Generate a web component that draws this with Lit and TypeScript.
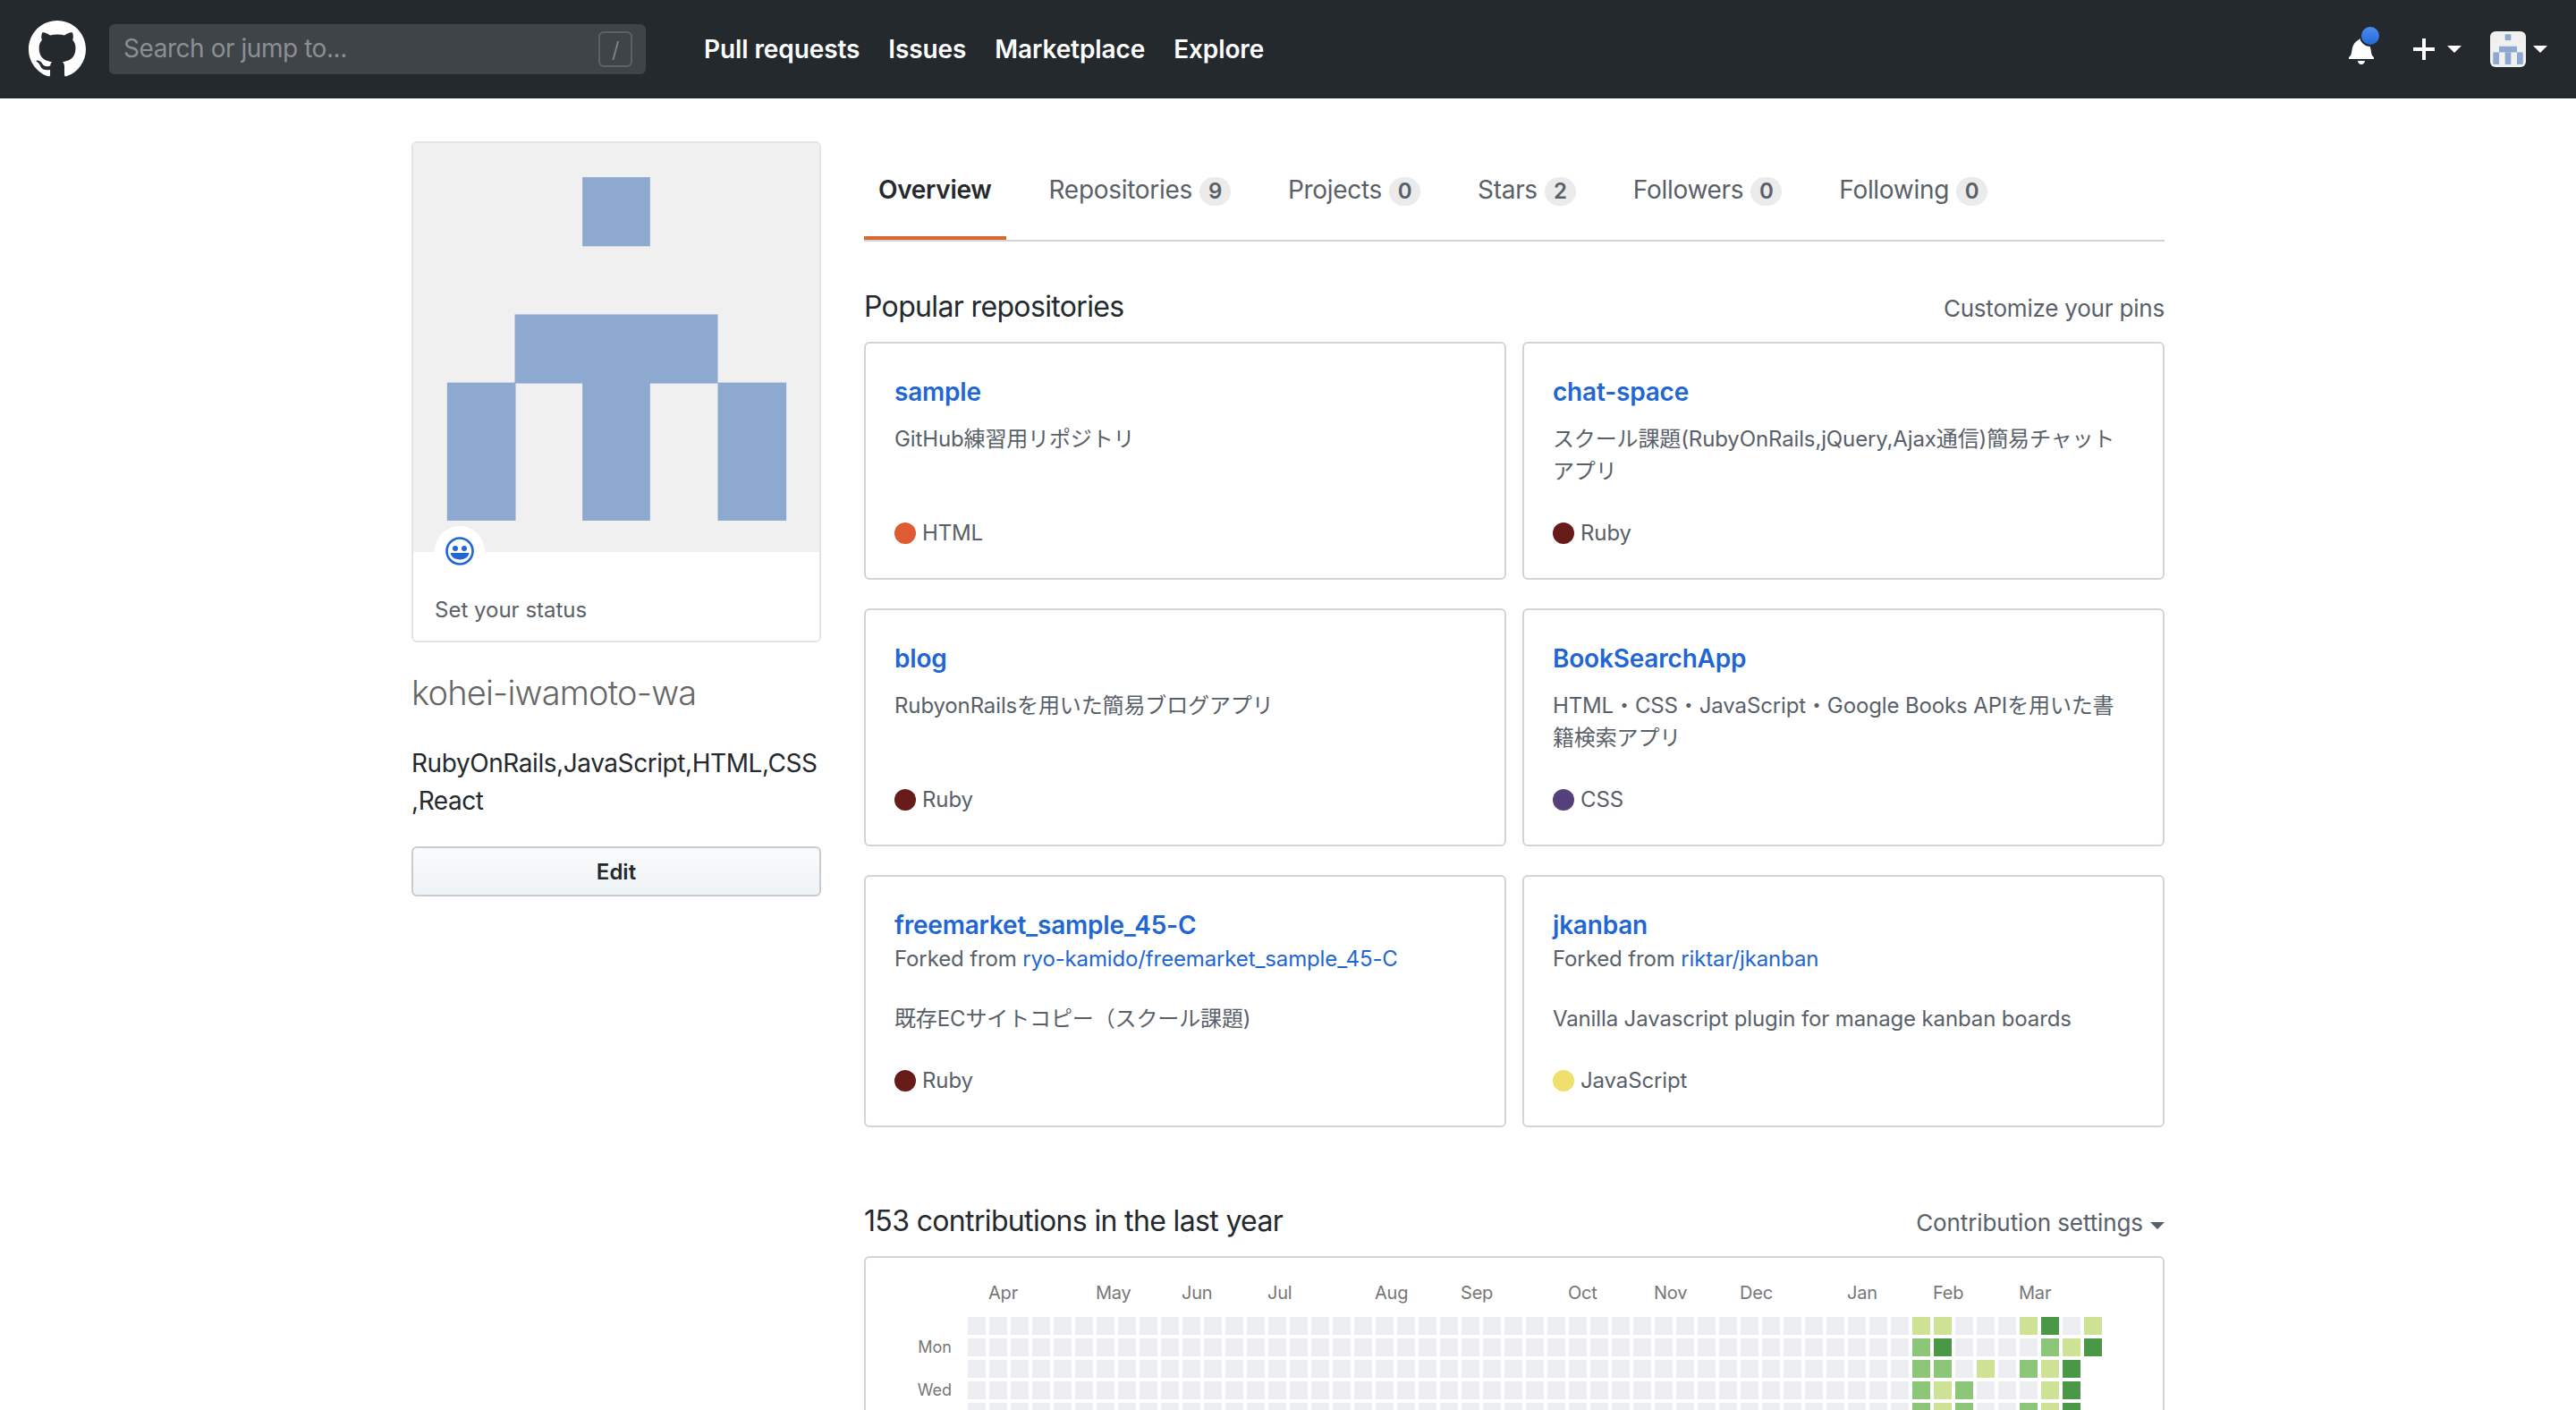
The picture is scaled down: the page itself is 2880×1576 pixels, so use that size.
import {LitElement, html, css, svg} from 'lit';
import {customElement} from 'lit/decorators.js';

const LOGO =
  'M8 0C3.58 0 0 3.58 0 8c0 3.54 2.29 6.53 5.47 7.59.4.07.55-.17.55-.38 0-.19-.01-.82-.01-1.49-2.01.37-2.53-.49-2.69-.94-.09-.23-.48-.94-.82-1.13-.28-.15-.68-.52-.01-.53.63-.01 1.08.58 1.23.82.72 1.21 1.87.87 2.33.66.07-.52.28-.87.51-1.07-1.78-.2-3.64-.89-3.64-3.95 0-.87.31-1.59.82-2.15-.08-.2-.36-1.02.08-2.12 0 0 .67-.21 2.2.82.64-.18 1.32-.27 2-.27.68 0 1.36.09 2 .27 1.53-1.04 2.2-.82 2.2-.82.44 1.1.16 1.92.08 2.12.51.56.82 1.27.82 2.15 0 3.07-1.87 3.75-3.65 3.95.29.25.54.73.54 1.48 0 1.07-.01 1.93-.01 2.2 0 .21.15.46.55.38A8.013 8.013 0 0016 8c0-4.42-3.58-8-8-8z';
const BELL =
  'M14 12v1H0v-1l.73-.58c.77-.77.81-2.55 1.19-4.42C2.69 3.23 6 2 6 2c0-.55.45-1 1-1s1 .45 1 1c0 0 3.39 1.23 4.16 5 .38 1.88.42 3.66 1.19 4.42l.66.58H14zm-7 4c1.11 0 2-.89 2-2H5c0 1.11.89 2 2 2z';
const PLUS = 'M12 9H7v5H5V9H0V7h5V2h2v5h5v2z';

const RUBY = '#681c19';

const REPOS = [
  {name: 'sample', desc: 'GitHub練習用リポジトリ', lang: 'HTML', color: '#de5b34'},
  {name: 'chat-space', desc: 'スクール課題(RubyOnRails,jQuery,Ajax通信)簡易チャットアプリ', lang: 'Ruby', color: RUBY},
  {name: 'blog', desc: 'RubyonRailsを用いた簡易ブログアプリ', lang: 'Ruby', color: RUBY},
  {name: 'BookSearchApp', desc: 'HTML・CSS・JavaScript・Google Books APIを用いた書籍検索アプリ', lang: 'CSS', color: '#56407c'},
  {name: 'freemarket_sample_45-C', fork: 'ryo-kamido/freemarket_sample_45-C', desc: '既存ECサイトコピー（スクール課題)', lang: 'Ruby', color: RUBY},
  {name: 'jkanban', fork: 'riktar/jkanban', desc: 'Vanilla Javascript plugin for manage kanban boards', lang: 'JavaScript', color: '#efdf6d'},
];

const TABS = [
  {label: 'Repositories', count: 9},
  {label: 'Projects', count: 0},
  {label: 'Stars', count: 2},
  {label: 'Followers', count: 0},
  {label: 'Following', count: 0},
];

const MONTHS: [string, number][] = [
  ['Apr', 1], ['May', 6], ['Jun', 10], ['Jul', 14], ['Aug', 19], ['Sep', 23],
  ['Oct', 28], ['Nov', 32], ['Dec', 36], ['Jan', 41], ['Feb', 45], ['Mar', 49],
];

// last nine weeks, one string per weekday: . none, l light, m mid, d dark
const RECENT = ['ll...ld.l', 'md....mld', 'mm.l.mld', 'mlm...ld', 'mlm..mld', 'l.....l.', '.l....m.'];
const WEEKS = 53;
const FIRST_RECENT = 44;

function cellClass(week: number, day: number) {
  if (week < FIRST_RECENT) return 'cell';
  const c = RECENT[day][week - FIRST_RECENT];
  if (c === undefined) return 'cell blank';
  return c === '.' ? 'cell' : `cell ${c}`;
}

function identicon(bg: string) {
  // 5x6 block pattern on a 456 square
  return svg`
    <rect width="456" height="456" fill=${bg}></rect>
    <g fill="#8da9d0">
      <rect x="190" y="38" width="76" height="77"></rect>
      <rect x="114" y="191" width="228" height="77"></rect>
      <rect x="38" y="267" width="77" height="154"></rect>
      <rect x="190" y="267" width="76" height="154"></rect>
      <rect x="342" y="267" width="77" height="154"></rect>
    </g>`;
}

@customElement('app-root')
export class AppRoot extends LitElement {
  static styles = css`
    :host {
      display: block;
      height: 1576px;
      overflow: hidden;
      background: #fff;
      color: #24292e;
      font-family: Inter, 'Noto Sans CJK JP', sans-serif;
    }
    a {
      color: #2266d3;
      text-decoration: none;
    }

    .nav {
      display: flex;
      align-items: center;
      height: 110px;
      padding: 0 32px;
      background: #24292e;
    }
    .logo {
      width: 64px;
      height: 64px;
      fill: #fff;
      margin-right: 26px;
    }
    .search {
      display: flex;
      align-items: center;
      justify-content: space-between;
      box-sizing: border-box;
      width: 600px;
      height: 56px;
      padding: 0 15px 0 16px;
      border-radius: 6px;
      background: #3f4448;
      color: #8b8f92;
      font-size: 28px;
      letter-spacing: -0.45px;
    }
    .placeholder {
      margin-bottom: 2px;
    }
    .slash {
      display: flex;
      align-items: center;
      justify-content: center;
      box-sizing: border-box;
      width: 38px;
      height: 40px;
      border: 2px solid #5d6266;
      border-radius: 6px;
      font-size: 24px;
      font-weight: 300;
    }
    .links {
      display: flex;
      gap: 32px;
      margin-left: 65px;
      color: #fff;
      font-size: 28px;
      font-weight: 600;
      letter-spacing: -0.1px;
    }
    .nav-right {
      display: flex;
      align-items: center;
      margin-left: auto;
    }
    .bell {
      position: relative;
      display: flex;
      width: 28px;
      height: 32px;
      margin-top: 2px;
      margin-right: 44px;
    }
    .bell svg,
    .plus {
      fill: #fff;
    }
    .dot {
      position: absolute;
      left: 12px;
      top: -12px;
      width: 20px;
      height: 20px;
      border: 2px solid #24292e;
      border-radius: 50%;
      background: linear-gradient(#4c8df0, #2269d8);
    }
    .plus {
      width: 24px;
      height: 32px;
      margin-right: 14px;
    }
    .caret {
      width: 0;
      height: 0;
      border: 8px solid transparent;
      border-top-color: #fff;
      border-bottom: 0;
    }
    .caret.first {
      margin-right: 32px;
    }
    .nav-avatar {
      display: block;
      width: 40px;
      height: 40px;
      margin-right: 8px;
      border-radius: 6px;
    }

    .page {
      display: grid;
      grid-template-columns: 458px 1454px;
      column-gap: 48px;
      margin: 0 460px;
      padding-top: 48px;
    }

    .profile-card {
      position: relative;
      border: 2px solid #e1e4e8;
      border-radius: 6px;
    }
    .profile-img {
      display: block;
      width: 454px;
      height: 457px;
      border-radius: 4px 4px 0 0;
    }
    .status-icon {
      position: absolute;
      left: 24px;
      top: 428px;
      display: flex;
      align-items: center;
      justify-content: center;
      width: 56px;
      height: 56px;
      border-radius: 50%;
      background: #fff;
    }
    .status-icon svg {
      width: 32px;
      height: 32px;
    }
    .status-text {
      padding: 47px 24px 16px;
      color: #586069;
      font-size: 24px;
      line-height: 36px;
    }
    .name {
      margin: 31px 0 0;
      color: #666;
      font-size: 38px;
      font-weight: 300;
      line-height: 50px;
      letter-spacing: -0.8px;
    }
    .bio {
      margin: 33px 0 0;
      font-size: 28px;
      line-height: 42px;
      letter-spacing: -0.43px;
    }
    .edit {
      display: flex;
      align-items: center;
      justify-content: center;
      box-sizing: border-box;
      height: 56px;
      margin-top: 30px;
      border: 2px solid #c8ccd0;
      border-radius: 6px;
      background: linear-gradient(#fafbfc, #eff3f6);
      font-size: 24px;
      font-weight: 600;
    }

    .tabs {
      display: flex;
      gap: 32px;
      height: 112px;
      box-sizing: border-box;
      border-bottom: 2px solid #d1d5da;
    }
    .tab {
      display: flex;
      align-items: flex-start;
      gap: 8px;
      box-sizing: border-box;
      height: 112px;
      padding: 33px 16px 0;
      color: #586069;
      font-size: 28px;
      line-height: 42px;
      letter-spacing: -0.3px;
    }
    .tab.active {
      height: 110px;
      border-bottom: 4px solid #d6692b;
      color: #24292e;
      font-weight: 600;
    }
    .badge {
      display: flex;
      align-items: center;
      justify-content: center;
      min-width: 35px;
      height: 32px;
      margin-top: 7px;
      border-radius: 16px;
      background: #ebebeb;
      font-size: 24px;
      font-weight: 600;
      line-height: 32px;
    }

    .section-head {
      display: flex;
      align-items: baseline;
      justify-content: space-between;
    }
    .pinned-head {
      margin-top: 49px;
    }
    .contrib-head {
      margin-top: 81px;
    }
    .section-head h2 {
      margin: 0;
      font-size: 32px;
      font-weight: 400;
      line-height: 48px;
      letter-spacing: -0.65px;
    }
    .section-head span {
      color: #586069;
      font-size: 26px;
      letter-spacing: -0.1px;
    }
    .section-head .customize {
      letter-spacing: -0.2px;
    }
    .settings-caret {
      display: inline-block;
      width: 0;
      height: 0;
      margin-left: 8px;
      border: 8px solid transparent;
      border-top-color: #586069;
      border-bottom: 0;
      vertical-align: 2px;
    }

    .cards {
      display: grid;
      grid-template-columns: 718px 718px;
      grid-template-rows: 266px 266px 282px;
      gap: 32px 18px;
      margin-top: 15px;
    }
    .card {
      display: flex;
      flex-direction: column;
      box-sizing: border-box;
      padding: 33px 32px 32px;
      border: 2px solid #d1d5da;
      border-radius: 6px;
    }
    .card-title {
      font-size: 28px;
      font-weight: 600;
      line-height: 42px;
      letter-spacing: -0.2px;
    }
    .fork {
      margin-top: -1px;
      color: #586069;
      font-size: 24px;
      line-height: 36px;
      letter-spacing: -0.13px;
    }
    .desc {
      margin-top: 14px;
      color: #586069;
      font-size: 24px;
      line-height: 36px;
      letter-spacing: -0.13px;
    }
    .fork + .desc {
      margin-top: 31px;
    }
    .lang {
      display: flex;
      align-items: center;
      gap: 7px;
      margin-top: auto;
      color: #586069;
      font-size: 24px;
      line-height: 36px;
      letter-spacing: -0.13px;
    }
    .lang i {
      width: 24px;
      height: 24px;
      border-radius: 50%;
    }

    .graph-box {
      margin-top: 15px;
      padding-top: 25px;
      border: 2px solid #d1d5da;
      border-radius: 6px;
    }
    .months {
      display: grid;
      grid-template-columns: repeat(53, 20px);
      column-gap: 4px;
      margin-left: 113px;
      color: #767676;
      font-size: 20px;
      line-height: 28px;
      letter-spacing: -0.2px;
      white-space: nowrap;
    }
    .graph-body {
      display: flex;
      margin-top: 13px;
    }
    .days {
      display: grid;
      grid-template-rows: repeat(7, 20px);
      row-gap: 4px;
      width: 96px;
      margin-right: 18px;
      color: #767676;
      font-size: 18px;
      line-height: 20px;
      text-align: right;
    }
    .weeks {
      display: grid;
      grid-auto-flow: column;
      grid-template-rows: repeat(7, 20px);
      grid-template-columns: repeat(53, 20px);
      gap: 4px;
    }
    .cell {
      background: #ebedf0;
    }
    .cell.blank {
      background: none;
    }
    .cell.l {
      background: #cee295;
    }
    .cell.m {
      background: #8cc678;
    }
    .cell.d {
      background: #4b9748;
    }
  `;

  renderCard(r: (typeof REPOS)[number]) {
    return html`
      <div class="card">
        <a class="card-title">${r.name}</a>
        ${r.fork ? html`<div class="fork">Forked from <a>${r.fork}</a></div>` : ''}
        <div class="desc">${r.desc}</div>
        <div class="lang"><i style="background:${r.color}"></i>${r.lang}</div>
      </div>
    `;
  }

  renderGraph() {
    const cells = [];
    for (let w = 0; w < WEEKS; w++) {
      for (let d = 0; d < 7; d++) {
        cells.push(html`<div class=${cellClass(w, d)}></div>`);
      }
    }
    return html`
      <div class="graph-box">
        <div class="months">
          ${MONTHS.map(([m, col]) => html`<span style="grid-column:${col + 1}">${m}</span>`)}
        </div>
        <div class="graph-body">
          <div class="days">
            <span></span><span>Mon</span><span></span><span>Wed</span>
          </div>
          <div class="weeks">${cells}</div>
        </div>
      </div>
    `;
  }

  render() {
    return html`
      <header class="nav">
        <svg class="logo" viewBox="0 0 16 16"><path d=${LOGO}></path></svg>
        <div class="search"><span class="placeholder">Search or jump to...</span><span class="slash">/</span></div>
        <div class="links">
          <span>Pull requests</span><span>Issues</span><span>Marketplace</span><span>Explore</span>
        </div>
        <div class="nav-right">
          <div class="bell">
            <svg viewBox="0 0 14 16" width="28" height="32"><path d=${BELL}></path></svg>
            <span class="dot"></span>
          </div>
          <svg class="plus" viewBox="0 0 12 16"><path d=${PLUS}></path></svg>
          <span class="caret first"></span>
          <svg class="nav-avatar" viewBox="0 0 456 456">${identicon('#f0f0f0')}</svg>
          <span class="caret"></span>
        </div>
      </header>

      <div class="page">
        <aside>
          <div class="profile-card">
            <svg class="profile-img" viewBox="0 0 456 456" preserveAspectRatio="none">${identicon('#f0f0f0')}</svg>
            <div class="status-icon">
              <svg viewBox="0 0 32 32">
                <circle cx="16" cy="16" r="14.500" fill="none" stroke="#2266d3" stroke-width="2.600"></circle>
                <circle cx="11" cy="13" r="3" fill="#2266d3"></circle>
                <circle cx="21" cy="13" r="3" fill="#2266d3"></circle>
                <path d="M5.500 18h21c-.8 4.600-5 7.500-10.500 7.500S6.300 22.600 5.500 18z" fill="#2266d3"></path>
              </svg>
            </div>
            <div class="status-text">Set your status</div>
          </div>
          <h1 class="name">kohei-iwamoto-wa</h1>
          <p class="bio">RubyOnRails,JavaScript,HTML,CSS<br />,React</p>
          <div class="edit">Edit</div>
        </aside>

        <main>
          <nav class="tabs">
            <div class="tab active">Overview</div>
            ${TABS.map(t => html`<div class="tab">${t.label}<span class="badge">${t.count}</span></div>`)}
          </nav>

          <div class="section-head pinned-head">
            <h2>Popular repositories</h2>
            <span class="customize">Customize your pins</span>
          </div>
          <div class="cards">${REPOS.map(r => this.renderCard(r))}</div>

          <div class="section-head contrib-head">
            <h2>153 contributions in the last year</h2>
            <span>Contribution settings<i class="settings-caret"></i></span>
          </div>
          ${this.renderGraph()}
        </main>
      </div>
    `;
  }
}
